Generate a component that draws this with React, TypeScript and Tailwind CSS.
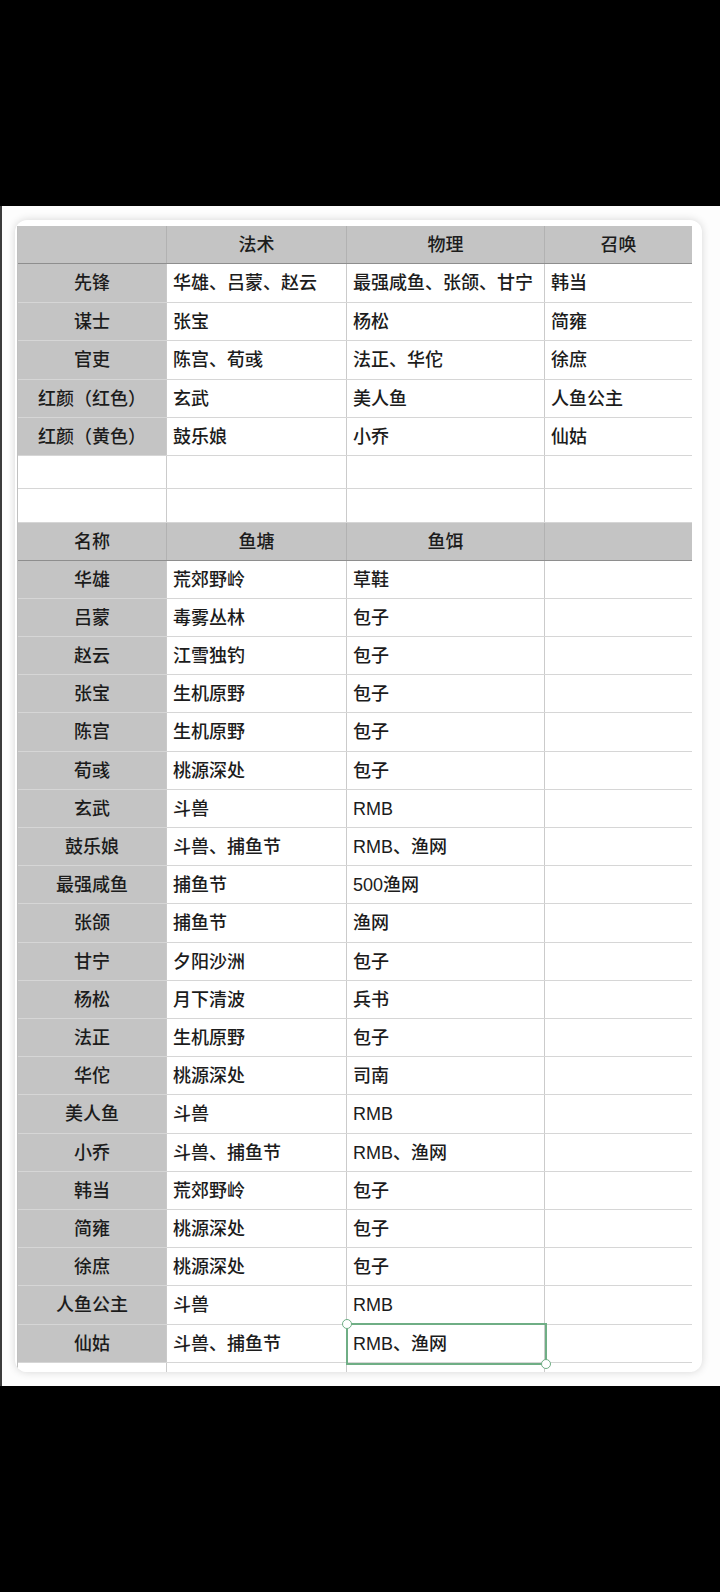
const font = { fontFamily: '"Liberation Sans", "Noto Sans CJK SC", sans-serif' };

const widths = ["w-[149px]", "w-[180px]", "w-[198px]", "w-[148px]"];

const topRows = [
  ["先锋", "华雄、吕蒙、赵云", "最强咸鱼、张颌、甘宁", "韩当"],
  ["谋士", "张宝", "杨松", "简雍"],
  ["官吏", "陈宫、荀彧", "法正、华佗", "徐庶"],
  ["红颜（红色）", "玄武", "美人鱼", "人鱼公主"],
  ["红颜（黄色）", "鼓乐娘", "小乔", "仙姑"],
];
const topHeights = ["h-[39px]", "h-[38px]", "h-[39px]", "h-[38px]", "h-[38px]"];

const fishRows = [
  ["华雄", "荒郊野岭", "草鞋"],
  ["吕蒙", "毒雾丛林", "包子"],
  ["赵云", "江雪独钓", "包子"],
  ["张宝", "生机原野", "包子"],
  ["陈宫", "生机原野", "包子"],
  ["荀彧", "桃源深处", "包子"],
  ["玄武", "斗兽", "RMB"],
  ["鼓乐娘", "斗兽、捕鱼节", "RMB、渔网"],
  ["最强咸鱼", "捕鱼节", "500渔网"],
  ["张颌", "捕鱼节", "渔网"],
  ["甘宁", "夕阳沙洲", "包子"],
  ["杨松", "月下清波", "兵书"],
  ["法正", "生机原野", "包子"],
  ["华佗", "桃源深处", "司南"],
  ["美人鱼", "斗兽", "RMB"],
  ["小乔", "斗兽、捕鱼节", "RMB、渔网"],
  ["韩当", "荒郊野岭", "包子"],
  ["简雍", "桃源深处", "包子"],
  ["徐庶", "桃源深处", "包子"],
  ["人鱼公主", "斗兽", "RMB"],
  ["仙姑", "斗兽、捕鱼节", "RMB、渔网"],
];
const fishHeights = [
  "h-[38px]", "h-[38px]", "h-[38px]", "h-[38px]", "h-[39px]",
  "h-[38px]", "h-[38px]", "h-[38px]", "h-[38px]", "h-[39px]",
  "h-[38px]", "h-[38px]", "h-[38px]", "h-[38px]", "h-[39px]",
  "h-[38px]", "h-[38px]", "h-[38px]", "h-[38px]", "h-[39px]",
  "h-[38px]",
];

const HeaderRow = ({ cells }: { cells: string[] }) => (
  <div className="flex h-[38px] bg-[#c4c4c4] border-b border-[#8e8e8e]">
    {cells.map((c, i) => (
      <div
        key={i}
        className={`${widths[i]} shrink-0 flex items-center justify-center border-r border-[#b2b2b2]`}
      >
        {c}
      </div>
    ))}
  </div>
);

const DataRow = ({
  cells,
  h,
  selected,
}: {
  cells: string[];
  h: string;
  selected?: boolean;
}) => (
  <div className={`flex ${h} border-b border-[#d6d6d6]`}>
    <div className={`${widths[0]} shrink-0 flex items-center justify-center bg-[#c4c4c4] border-r border-[#c9c9c9]`}>
      {cells[0]}
    </div>
    {[1, 2, 3].map((i) => (
      <div
        key={i}
        className={`${widths[i]} shrink-0 relative flex items-center pl-[6px] bg-white border-r border-[#cbcbcb]`}
      >
        {cells[i] ?? ""}
        {selected && i === 2 && (
          // selection box over the active cell
          <div className="absolute z-10 -left-[1px] -top-[2px] -right-[3px] -bottom-[3px] border-2 border-[#6fae85]">
            <div className="absolute -left-[6px] -top-[6px] w-[10px] h-[10px] rounded-full bg-white border-[1.5px] border-[#6fae85]" />
            <div className="absolute -right-[6px] -bottom-[6px] w-[10px] h-[10px] rounded-full bg-white border-[1.5px] border-[#6fae85]" />
          </div>
        )}
      </div>
    ))}
  </div>
);

const EmptyRow = ({ h }: { h: string }) => (
  <div className={`flex ${h} border-b border-[#d6d6d6]`}>
    {widths.map((w, i) => (
      <div key={i} className={`${w} shrink-0 bg-white border-r border-[#cbcbcb]`} />
    ))}
  </div>
);

export default function App() {
  return (
    <div className="w-[720px] h-[1592px] bg-black flex flex-col" style={font}>
      <div className="h-[206px] shrink-0" />
      <div className="h-[1180px] shrink-0 bg-[#fdfdfd] border-l-2 border-[#3c3c3c] pl-[13px] pt-[14px]">
        <div className="w-[687px] h-[1152px] rounded-[12px] bg-white shadow-[0_0_9px_rgba(0,0,0,0.16)] overflow-hidden pl-[2px] pt-[6px]">
          <div className="w-[675px] h-[1146px] overflow-hidden text-[18px] font-medium leading-none text-[#1c1c1c] border-l border-[#c0c0c0]">
            <HeaderRow cells={["", "法术", "物理", "召唤"]} />
            {topRows.map((r, i) => (
              <DataRow key={i} cells={r} h={topHeights[i]} />
            ))}
            <EmptyRow h="h-[33px]" />
            <EmptyRow h="h-[34px]" />
            <HeaderRow cells={["名称", "鱼塘", "鱼饵", ""]} />
            {fishRows.map((r, i) => (
              <DataRow
                key={i}
                cells={[...r, ""]}
                h={fishHeights[i]}
                selected={i === fishRows.length - 1}
              />
            ))}
            <EmptyRow h="h-[38px]" />
          </div>
        </div>
      </div>
      <div className="flex-1" />
    </div>
  );
}
